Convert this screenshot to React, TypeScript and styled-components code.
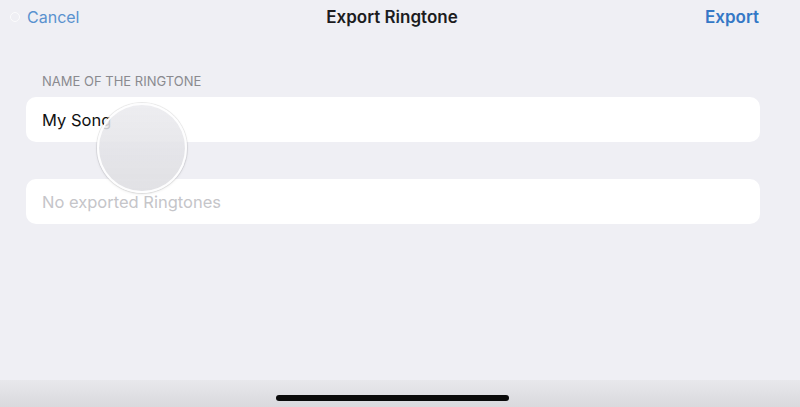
import styled, { createGlobalStyle } from 'styled-components';

const GlobalStyle = createGlobalStyle`
    html, body {
        margin: 0;
        padding: 0;
        background: #efeff4;
    }
    body {
        font-family: Inter, "Noto Sans", "Liberation Sans", sans-serif;
        -webkit-font-smoothing: antialiased;
    }
`;

const Screen = styled.div`
    position: relative;
    width: 800px;
    height: 407px;
    display: flex;
    flex-direction: column;
    background: #efeff4;
    overflow: hidden;
`;

const NavBar = styled.div`
    height: 34px;
    display: grid;
    grid-template-columns: 1fr auto 1fr;
    align-items: center;
    padding: 0 26px 0 10px;
`;

const BackButton = styled.div`
    display: flex;
    align-items: center;
    gap: 7px;
    font-size: 16px;
    color: #3f82c9;
    opacity: 0.85;
`;

const FadedDot = styled.span`
    width: 8px;
    height: 8px;
    border: 1.5px solid rgba(255, 255, 255, 0.9);
    border-radius: 50%;
`;

const Title = styled.div`
    font-size: 17px;
    font-weight: 600;
    color: #1c1c1e;
    letter-spacing: 0px;
`;

const ActionButton = styled.div`
    justify-self: end;
    margin-right: 15px;
    font-size: 17px;
    font-weight: 600;
    color: #3478c6;
`;

const Content = styled.div`
    flex: 1;
    display: flex;
    flex-direction: column;
    padding: 39px 40px 0 26px;
`;

const SectionHeader = styled.div`
    font-size: 13px;
    line-height: 16px;
    color: #8a8a8f;
    padding-left: 16px;
    margin-bottom: 8px;
`;

const Card = styled.div<{ $muted?: boolean }>`
    height: 45px;
    display: flex;
    align-items: center;
    padding-left: 16px;
    background: #fff;
    border-radius: 10px;
    font-size: 16.5px;
    color: ${(p) => (p.$muted ? '#c5c5c9' : '#111')};
    margin-bottom: 37px;
`;

const HomeArea = styled.div`
    height: 27px;
    display: flex;
    justify-content: center;
    padding: 15px 16px 0 0;
    box-sizing: border-box;
    background: linear-gradient(#e8e8ec, #d9d9dd);
`;

const HomeIndicator = styled.div`
    width: 233px;
    height: 6px;
    border-radius: 3px;
    background: #0a0a0a;
`;

// touch highlight left on screen while recording
const TouchSpot = styled.div`
    position: absolute;
    left: 97px;
    top: 103px;
    width: 86px;
    height: 86px;
    border-radius: 50%;
    border: 2px solid rgba(255, 255, 255, 0.95);
    background: linear-gradient(rgba(234, 234, 238, 0.85), rgba(222, 222, 226, 0.9));
    box-shadow: 0 0 0 1px rgba(0, 0, 0, 0.07), 0 1px 3px rgba(0, 0, 0, 0.1);
`;

const App = () => {
    return (
        <>
            <GlobalStyle />
            <Screen>
                <NavBar>
                    <BackButton>
                        <FadedDot />
                        Cancel
                    </BackButton>
                    <Title>Export Ringtone</Title>
                    <ActionButton>Export</ActionButton>
                </NavBar>
                <Content>
                    <SectionHeader>NAME OF THE RINGTONE</SectionHeader>
                    <Card>My Song</Card>
                    <Card $muted>No exported Ringtones</Card>
                </Content>
                <HomeArea>
                    <HomeIndicator />
                </HomeArea>
                <TouchSpot />
            </Screen>
        </>
    );
};

export default App;
